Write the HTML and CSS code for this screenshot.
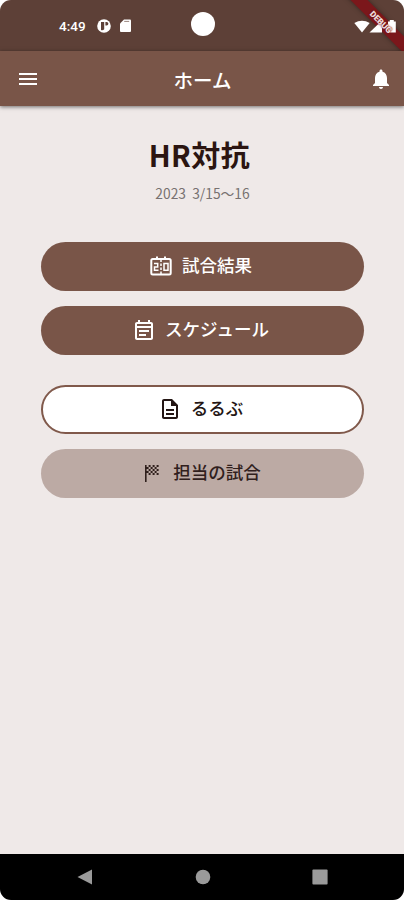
FILE: index.html
```html
<!DOCTYPE html>
<html lang="ja">
<head>
<meta charset="utf-8">
<title>ホーム</title>
<link rel="stylesheet" href="styles.css">
</head>
<body>
<div class="phone">
  <div class="status">
    <span class="clock">4:49</span>
    <svg class="status-app" viewBox="0 0 14 14"><circle cx="7" cy="7" r="6.8" fill="#fff"/><path d="M4 3h3.2v7.2c-.6.9-2 1.2-3.2.8zM8.4 3h1.2a1.6 1.6 0 0 1 0 3.6H8.4z" fill="#5d4037"/></svg>
    <svg class="status-sd" viewBox="0 0 11 13"><path d="M4 .5h6a1 1 0 0 1 1 1V12a1 1 0 0 1-1 1H1a1 1 0 0 1-1-1V4.5z" fill="#fff"/><path d="M4.2 2.4h5" stroke="#9b8780" stroke-width="1"/></svg>
    <span class="camera"></span>
    <svg class="signals" viewBox="0 0 46 16"><path d="M1.3 4Q9 -.7 16.7 4L9 13.5z" fill="#fff"/><path d="M16.5 13.5 29 1.5v12z" fill="#fff"/><path d="M35 2.5h1.8V1h4v1.5h2v11H35z" fill="#fff"/></svg>
    <div class="debug ribbon"></div>
    <div class="debug debug-label">DEBUG</div>
  </div>
  <header class="appbar">
    <svg class="menu" viewBox="0 0 24 24"><path fill="#fff" d="M3 18h18v-2H3zm0-5h18v-2H3zm0-7v2h18V6z"/></svg>
    <h1>ホーム</h1>
    <svg class="bell" viewBox="0 0 24 24"><path fill="#fff" d="M12 22c1.1 0 2-.9 2-2h-4c0 1.1.9 2 2 2m6-6v-5c0-3.07-1.63-5.64-4.5-6.32V4c0-.83-.67-1.5-1.5-1.5s-1.5.67-1.5 1.5v.68C7.64 5.36 6 7.92 6 11v5l-2 2v1h16v-1z"/></svg>
  </header>
  <main>
    <h2>HR対抗</h2>
    <p>2023&nbsp; 3/15〜16</p>
    <div class="actions">
      <a class="btn"><svg viewBox="0 0 24 24"><path d="M8 2.5V6M16 2.5V6" stroke="currentColor" stroke-width="2"/><rect x="2.3" y="5" width="19.4" height="15.5" rx="1.5" fill="none" stroke="currentColor" stroke-width="2"/><path d="M12 5v3m0 1.5V12m0 1.5V16m0 1.5V20" stroke="currentColor" stroke-width="1.5"/><path d="M5 9.5h3.7V13H5.5v3.3h4M19 9.5h-4v6.8h4z" fill="none" stroke="currentColor" stroke-width="1.5"/></svg><span>試合結果</span></a>
      <a class="btn"><svg viewBox="0 0 24 24"><path fill="currentColor" d="M19 4h-1V2h-2v2H8V2H6v2H5c-1.11 0-1.99.9-1.99 2L3 20c0 1.1.89 2 2 2h14c1.1 0 2-.9 2-2V6c0-1.1-.9-2-2-2m0 16H5V10h14zm0-12H5V6h14zM7 12h10v2H7zm0 4h7v2H7z"/></svg><span>スケジュール</span></a>
      <a class="btn outlined"><svg viewBox="0 0 24 24"><path fill="currentColor" d="M8 16h8v2H8zm0-4h8v2H8zm6-10H6c-1.1 0-2 .9-2 2v16c0 1.1.89 2 1.99 2H18c1.1 0 2-.9 2-2V8zm4 18H6V4h7v5h5z"/></svg><span>るるぶ</span></a>
      <a class="btn muted"><svg class="flag" viewBox="0 0 24 24"><path fill="currentColor" d="M4 4h1.6v17H4zM7.6 4h2v2h-2zM11.6 4h2v2h-2zM15.6 4h2v2h-2zM5.6 6h2v2h-2zM9.6 6h2v2h-2zM13.6 6h2v2h-2zM7.6 8h2v2h-2zM11.6 8h2v2h-2zM15.6 8h2v2h-2zM5.6 10h2v2h-2zM9.6 10h2v2h-2zM13.6 10h2v2h-2zM7.6 12h2v2h-2zM11.6 12h2v2h-2zM15.6 12h2v2h-2z"/></svg><span>担当の試合</span></a>
    </div>
  </main>
  <nav>
    <svg viewBox="0 0 16 16"><path d="M.5 8 15 .5v15z"/></svg>
    <svg viewBox="0 0 16 16"><circle cx="8" cy="8" r="7.3"/></svg>
    <svg viewBox="0 0 16 16"><rect x=".4" y=".4" width="15.2" height="15.2" rx="1"/></svg>
  </nav>
</div>
</body>
</html>
```
FILE: styles.css
```css
* { box-sizing: border-box; }
body { margin: 0; background: #fff; font-family: "Noto Sans CJK JP", sans-serif; }
.phone {
  width: 404px; height: 900px; display: flex; flex-direction: column;
  background: #efe9e8; border-radius: 11px; overflow: hidden;
}
.status {
  position: relative; flex: none; height: 51px; padding-left: 59px;
  display: flex; align-items: center; background: #5d4037; color: #fff;
}
.clock { width: 38px; font: 500 13.5px/16px Roboto, sans-serif; }
.status-app { width: 14px; height: 14px; }
.status-sd { width: 11px; height: 13px; margin-left: 9px; }
.camera { width: 24px; height: 24px; margin: -3px 0 0 60px; border-radius: 50%; background: #fff; }
.signals { position: relative; z-index: 1; width: 46px; height: 16px; margin-left: 138px; margin-top: 2px; }
.debug {
  position: absolute; left: 331px; top: 16px; width: 100px; height: 12px;
  transform: rotate(45deg);
  font: 900 8.5px/12px Roboto, sans-serif; text-align: center;
}
.ribbon { background: #7b171b; box-shadow: 0 0 5px #0006; }
.debug-label {
  z-index: 2; color: #eedddd;
  text-shadow: 0 0 1px #7b171b, 0 0 2px #7b171b;
}
.appbar {
  position: relative; flex: none; height: 55px; padding: 0 11px 0 16px;
  display: flex; align-items: center; justify-content: space-between;
  background: #795548; color: #fff; box-shadow: 0 1px 4px #0008;
}
.menu, .bell { width: 24px; height: 24px; }
h1 { margin: 2px 4px 0 0; font-size: 19.5px; line-height: 28px; font-weight: 500; }
main { flex: 1; padding: 27px 40px 0 41px; text-align: center; color: #2b1511; }
h2 { margin: 0 6px 0 0; font-size: 29px; line-height: 42px; font-weight: 700; letter-spacing: .5px; }
p { margin: 7px 0 0; font-size: 13.8px; line-height: 22px; color: #777170; }
.actions { margin-top: 38px; display: flex; flex-direction: column; gap: 15px; }
.btn {
  height: 49px; border-radius: 25px; display: flex; align-items: center; justify-content: center;
  gap: 9px; padding-right: 4px; background: #795548; color: #fff;
  font-size: 17.5px; line-height: 26px; font-weight: 500;
}
.btn svg { width: 24px; height: 24px; margin-top: -1px; }
.btn .flag { margin: -1px -1px 0 1px; }
.btn span { margin-top: -3px; }
.outlined { margin-top: 15px; background: #fff; border: 2px solid #80594b; color: #241614; }
.muted { background: #bcaaa4; color: #30201d; }
nav {
  flex: none; height: 46px; padding: 0 76px 0 77px; display: flex; align-items: center;
  justify-content: space-between; background: #000;
}
nav svg { width: 16px; height: 16px; fill: #9a9a9a; }
```
